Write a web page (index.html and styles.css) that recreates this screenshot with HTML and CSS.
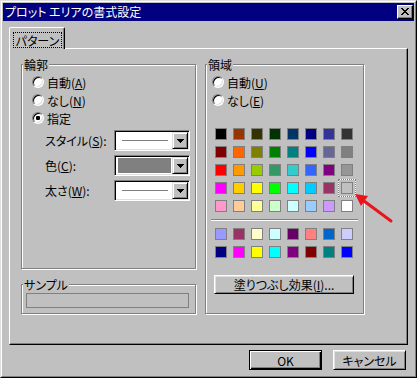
FILE: index.html
```html
<!DOCTYPE html>
<html lang="ja">
<head>
<meta charset="utf-8">
<title>プロット エリアの書式設定</title>
<link rel="stylesheet" href="styles.css">
</head>
<body>
<div class="window">
  <div class="frame">
    <div class="titlebar">
      <span class="title">プロット エリアの書式設定</span>
      <span class="close"><svg width="8" height="7" viewBox="0 0 8 7" shape-rendering="crispEdges"><path d="M0 0h2v1h-2zM6 0h2v1h-2zM1 1h2v1h-2zM5 1h2v1h-2zM2 2h4v1h-4zM3 3h2v1h-2zM2 4h4v1h-4zM1 5h2v1h-2zM5 5h2v1h-2zM0 6h2v1h-2zM6 6h2v1h-2z" fill="#000"/></svg></span>
    </div>
    <div class="client">
      <div class="tabs">
        <div class="tab"><span class="focus">パターン</span></div>
      </div>
      <div class="panel">
        <div class="col">
          <div class="group g-border">
            <div class="legend">輪郭</div>
            <div class="radios">
              <div class="radio-row"><span class="radio"></span><span>自動(<u>A</u>)</span></div>
              <div class="radio-row"><span class="radio"></span><span>なし(<u>N</u>)</span></div>
              <div class="radio-row"><span class="radio on"></span><span>指定</span></div>
            </div>
            <div class="props">
              <span class="plabel">スタイル(<u>S</u>):</span>
              <span class="combo"><span class="cval"><span class="cline"></span></span><span class="drop"><svg width="7" height="4" viewBox="0 0 7 4" shape-rendering="crispEdges"><path d="M0 0h7v1h-7zM1 1h5v1h-5zM2 2h3v1h-3zM3 3h1v1h-1z" fill="#000"/></svg></span></span>
              <span class="plabel">色(<u>C</u>):</span>
              <span class="combo"><span class="cval nopad"><span class="cfill"></span></span><span class="drop"><svg width="7" height="4" viewBox="0 0 7 4" shape-rendering="crispEdges"><path d="M0 0h7v1h-7zM1 1h5v1h-5zM2 2h3v1h-3zM3 3h1v1h-1z" fill="#000"/></svg></span></span>
              <span class="plabel">太さ(<u>W</u>):</span>
              <span class="combo"><span class="cval"><span class="cline"></span></span><span class="drop"><svg width="7" height="4" viewBox="0 0 7 4" shape-rendering="crispEdges"><path d="M0 0h7v1h-7zM1 1h5v1h-5zM2 2h3v1h-3zM3 3h1v1h-1z" fill="#000"/></svg></span></span>
            </div>
          </div>
          <div class="group g-sample">
            <div class="legend">サンプル</div>
            <div class="sample"></div>
          </div>
        </div>
        <div class="group g-area">
          <div class="legend">領域</div>
          <div class="radios area-radios">
            <div class="radio-row"><span class="radio"></span><span>自動(<u>U</u>)</span></div>
            <div class="radio-row"><span class="radio"></span><span>なし(<u>E</u>)</span></div>
          </div>
          <div class="swatches first">
            <span class="sw" style="background:#000000"></span>
            <span class="sw" style="background:#993300"></span>
            <span class="sw" style="background:#333300"></span>
            <span class="sw" style="background:#003300"></span>
            <span class="sw" style="background:#003366"></span>
            <span class="sw" style="background:#000080"></span>
            <span class="sw" style="background:#333399"></span>
            <span class="sw" style="background:#333333"></span>
            <span class="sw" style="background:#800000"></span>
            <span class="sw" style="background:#FF6600"></span>
            <span class="sw" style="background:#808000"></span>
            <span class="sw" style="background:#008000"></span>
            <span class="sw" style="background:#008080"></span>
            <span class="sw" style="background:#0000FF"></span>
            <span class="sw" style="background:#666699"></span>
            <span class="sw" style="background:#808080"></span>
            <span class="sw" style="background:#FF0000"></span>
            <span class="sw" style="background:#FF9900"></span>
            <span class="sw" style="background:#99CC00"></span>
            <span class="sw" style="background:#339966"></span>
            <span class="sw" style="background:#33CCCC"></span>
            <span class="sw" style="background:#3366FF"></span>
            <span class="sw" style="background:#800080"></span>
            <span class="sw" style="background:#969696"></span>
            <span class="sw" style="background:#FF00FF"></span>
            <span class="sw" style="background:#FFCC00"></span>
            <span class="sw" style="background:#FFFF00"></span>
            <span class="sw" style="background:#00FF00"></span>
            <span class="sw" style="background:#00FFFF"></span>
            <span class="sw" style="background:#00CCFF"></span>
            <span class="sw" style="background:#993366"></span>
            <span class="sw sel" style="background:#C0C0C0"></span>
            <span class="sw" style="background:#FF99CC"></span>
            <span class="sw" style="background:#FFCC99"></span>
            <span class="sw" style="background:#FFFF99"></span>
            <span class="sw" style="background:#CCFFCC"></span>
            <span class="sw" style="background:#CCFFFF"></span>
            <span class="sw" style="background:#99CCFF"></span>
            <span class="sw" style="background:#CC99FF"></span>
            <span class="sw" style="background:#FFFFFF"></span>
          </div>
          <div class="sep"></div>
          <div class="swatches second">
            <span class="sw" style="background:#9999FF"></span>
            <span class="sw" style="background:#993366"></span>
            <span class="sw" style="background:#FFFFCC"></span>
            <span class="sw" style="background:#CCFFFF"></span>
            <span class="sw" style="background:#660066"></span>
            <span class="sw" style="background:#FF8080"></span>
            <span class="sw" style="background:#0066CC"></span>
            <span class="sw" style="background:#CCCCFF"></span>
            <span class="sw" style="background:#000080"></span>
            <span class="sw" style="background:#FF00FF"></span>
            <span class="sw" style="background:#FFFF00"></span>
            <span class="sw" style="background:#00FFFF"></span>
            <span class="sw" style="background:#800080"></span>
            <span class="sw" style="background:#800000"></span>
            <span class="sw" style="background:#008080"></span>
            <span class="sw" style="background:#0000FF"></span>
          </div>
          <div class="btn fillbtn">塗りつぶし効果(<u>I</u>)...</div>
        </div>
      </div>
      <div class="buttons">
        <div class="btn default">OK</div>
        <div class="btn">キャンセル</div>
      </div>
    </div>
  </div>
</div>
<svg class="arrow" width="417" height="378" viewBox="0 0 417 378">
  <line x1="391" y1="221" x2="364" y2="201" stroke="#e8161c" stroke-width="3" stroke-linecap="round"/>
  <polygon points="355,194 368,196 361,206" fill="#e8161c"/>
</svg>
</body>
</html>
```
FILE: styles.css
```css
* { box-sizing: border-box; }
html, body { margin: 0; padding: 0; }
body {
  width: 417px;
  height: 378px;
  overflow: hidden;
  position: relative;
  background: #c0c0c0;
  color: #000;
  font-family: "Noto Sans CJK JP", "Noto Sans", sans-serif;
  font-size: 12px;
  font-feature-settings: "palt";
}
u { text-decoration: underline; text-underline-offset: 1px; }

.window {
  width: 417px;
  height: 378px;
  border: 1px solid;
  border-color: #dfdfdf #000 #000 #dfdfdf;
}
.frame {
  height: 100%;
  border: 1px solid;
  border-color: #fff #808080 #808080 #fff;
  padding: 1px;
  display: flex;
  flex-direction: column;
}
.titlebar {
  flex: none;
  height: 18px;
  background: #000080;
  color: #fff;
  display: flex;
  align-items: center;
  justify-content: space-between;
  padding: 0 1px 0 2px;
}
.title { line-height: 18px; white-space: nowrap; }
.close {
  width: 16px;
  height: 14px;
  background: #c0c0c0;
  border: 1px solid;
  border-color: #fff #000 #000 #fff;
  box-shadow: inset -1px -1px #808080;
  display: flex;
  align-items: center;
  justify-content: center;
  padding-bottom: 1px;
}
.close svg { display: block; }

.client {
  flex: 1;
  display: flex;
  flex-direction: column;
  padding: 6px 6px 0 6px;
}
.tabs { display: flex; }
.tab {
  position: relative;
  z-index: 1;
  width: 56px;
  height: 22px;
  margin-bottom: -1px;
  background: #c0c0c0;
  border-left: 1px solid #fff;
  border-top: 1px solid #fff;
  border-right: 1px solid #000;
  border-radius: 2px 2px 0 0;
  box-shadow: inset -1px 0 #808080;
  padding: 4px 0 0 3px;
}
.focus {
  display: flex;
  align-items: center;
  justify-content: center;
  width: 49px;
  height: 16px;
  border: 1px dotted #000;
  white-space: nowrap;
}

.panel {
  height: 297px;
  border: 1px solid;
  border-color: #fff #000 #000 #fff;
  box-shadow: inset -1px -1px #808080;
  display: flex;
  align-items: flex-start;
  gap: 9px;
  padding: 15px 0 0 11px;
}
.col {
  width: 175px;
  display: flex;
  flex-direction: column;
  gap: 15px;
}
.group {
  border: 1px solid #808080;
  box-shadow: inset 1px 1px #fff, 1px 1px #fff;
}
.legend {
  width: max-content;
  height: 13px;
  line-height: 13px;
  margin: -7px 0 0 1px;
  padding: 0 1px;
  background: #c0c0c0;
  white-space: nowrap;
}
.g-border { height: 205px; }
.g-sample { height: 30px; }
.g-area { width: 159px; height: 250px; }

.radios { margin-top: 2px; padding-left: 10px; }
.area-radios { padding-left: 6px; }
.radio-row {
  display: flex;
  align-items: center;
  gap: 3px;
  height: 18px;
  white-space: nowrap;
}
.radio {
  flex: none;
  width: 12px;
  height: 12px;
  border-radius: 50%;
  border: 1px solid;
  border-color: #808080 #fff #fff #808080;
  box-shadow: inset 1px 1px #000, inset -1px -1px #dfdfdf;
  background: #fff;
}
.radio.on { background: radial-gradient(circle, #000 0 2px, #fff 2.4px); }

.props {
  display: grid;
  grid-template-columns: 69px 76px;
  grid-auto-rows: 21px;
  row-gap: 4px;
  align-items: center;
  margin: 3px 0 0 23px;
}
.plabel { white-space: nowrap; }
.combo {
  display: flex;
  height: 21px;
  border: 1px solid;
  border-color: #808080 #fff #fff #808080;
  box-shadow: inset 1px 1px #000, inset -1px -1px #dfdfdf;
  background: #fff;
  padding: 1px;
}
.cval {
  flex: 1;
  display: flex;
  align-items: center;
  padding: 0 4px 0 6px;
}
.cval.nopad { padding: 0; align-items: stretch; }
.cline { flex: 1; height: 1px; background: #808080; }
.cfill { flex: 1; margin: 1px 1px 1px 2px; background: #808080; }
.drop {
  width: 16px;
  border: 1px solid;
  border-color: #dfdfdf #000 #000 #dfdfdf;
  box-shadow: inset 1px 1px #fff, inset -1px -1px #808080;
  background: #c0c0c0;
  display: flex;
  align-items: center;
  justify-content: center;
}
.drop svg { display: block; }

.sample {
  width: 163px;
  height: 15px;
  margin: 2px 0 0 4px;
  border: 1px solid #808080;
}

.swatches {
  display: grid;
  grid-template-columns: repeat(8, 12px);
  grid-auto-rows: 12px;
  gap: 6px;
  margin-left: 9px;
}
.swatches.first { margin-top: 19px; }
.swatches.second { margin-top: 7px; }
.sw { display: block; border: 1px solid #808080; }
.sw.sel {
  box-shadow: 0 0 0 2px #c0c0c0, 0 0 0 3px #fff;
  outline: 1px dotted #808080;
  outline-offset: 2px;
}
.sep {
  width: 147px;
  height: 2px;
  margin: 7px 0 0 5px;
  border-top: 1px solid #808080;
  border-bottom: 1px solid #fff;
}

.btn {
  display: flex;
  align-items: center;
  justify-content: center;
  width: 73px;
  height: 20px;
  border: 1px solid;
  border-color: #fff #000 #000 #fff;
  box-shadow: inset 1px 1px #dfdfdf, inset -1px -1px #808080;
  white-space: nowrap;
}
.btn.default {
  border: 1px solid #000;
  box-shadow: inset 1px 1px #fff, inset -1px -1px #000, inset -2px -2px #808080;
}
.fillbtn {
  width: 140px;
  height: 19px;
  margin: 17px 0 0 8px;
}
.buttons {
  display: flex;
  justify-content: flex-end;
  gap: 11px;
  margin-top: 5px;
  padding-right: 2px;
}

.arrow {
  position: absolute;
  left: 0;
  top: 0;
  pointer-events: none;
}
```
